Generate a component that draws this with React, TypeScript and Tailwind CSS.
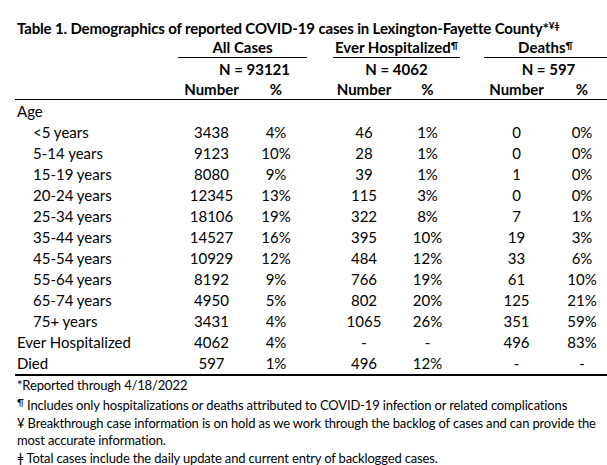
const GRID =
  "grid grid-cols-[178px_67px_62px_26px_62px_65px_24px_65px_58px] items-center";

type Row = { label: string; indent?: boolean; cells: string[] };

const ROWS: Row[] = [
  { label: "<5 years", indent: true, cells: ["3438", "4%", "46", "1%", "0", "0%"] },
  { label: "5-14 years", indent: true, cells: ["9123", "10%", "28", "1%", "0", "0%"] },
  { label: "15-19 years", indent: true, cells: ["8080", "9%", "39", "1%", "1", "0%"] },
  { label: "20-24 years", indent: true, cells: ["12345", "13%", "115", "3%", "0", "0%"] },
  { label: "25-34 years", indent: true, cells: ["18106", "19%", "322", "8%", "7", "1%"] },
  { label: "35-44 years", indent: true, cells: ["14527", "16%", "395", "10%", "19", "3%"] },
  { label: "45-54 years", indent: true, cells: ["10929", "12%", "484", "12%", "33", "6%"] },
  { label: "55-64 years", indent: true, cells: ["8192", "9%", "766", "19%", "61", "10%"] },
  { label: "65-74 years", indent: true, cells: ["4950", "5%", "802", "20%", "125", "21%"] },
  { label: "75+ years", indent: true, cells: ["3431", "4%", "1065", "26%", "351", "59%"] },
  { label: "Ever Hospitalized", cells: ["4062", "4%", "-", "-", "496", "83%"] },
  { label: "Died", cells: ["597", "1%", "496", "12%", "-", "-"] },
];

function Sup({ children }: { children: React.ReactNode }) {
  return <sup className="relative -top-[3px] text-[10px] leading-none">{children}</sup>;
}

function DataRow({ row }: { row: Row }) {
  const [a, b, c, d, e, f] = row.cells;
  return (
    <div className={`${GRID} h-[21px]`}>
      <div className={row.indent ? "pl-[33px]" : "pl-[17px]"}>{row.label}</div>
      <div className="text-center">{a}</div>
      <div className="text-center">{b}</div>
      <div />
      <div className="text-center">{c}</div>
      <div className="text-center">{d}</div>
      <div />
      <div className="text-center">{e}</div>
      <div className="pl-[8px] text-center">{f}</div>
    </div>
  );
}

export default function App() {
  return (
    <div className="w-[607px] h-[465px] overflow-hidden bg-white text-black font-['Lato',sans-serif] text-[15px] leading-none">
      <div className="h-[18px]" />
      <div className="h-[20px] flex items-center pl-[17px] font-bold whitespace-nowrap tracking-[-0.01em]">
        Table 1. Demographics of reported COVID-19 cases in Lexington-Fayette County*
        <Sup>¥ǂ</Sup>
      </div>

      {/* group headings */}
      <div className={`${GRID} h-[20px] font-bold`}>
        <div />
        <div className="col-span-2 h-full flex items-center justify-center border-b border-black">All Cases</div>
        <div />
        <div className="col-span-2 h-full flex items-center justify-center border-b border-black">
          Ever Hospitalized<Sup>¶</Sup>
        </div>
        <div />
        <div className="col-span-2 h-full flex items-center justify-center border-b border-black">
          Deaths<Sup>¶</Sup>
        </div>
      </div>

      <div className={`${GRID} h-[22px] font-bold`}>
        <div />
        <div className="col-span-2 pl-[24px] text-center">N = 93121</div>
        <div />
        <div className="col-span-2 text-center">N = 4062</div>
        <div />
        <div className="col-span-2 pl-[6px] text-center">N = 597</div>
      </div>

      <div className="ml-[15px] border-b border-black">
        <div className={`${GRID} h-[19px] font-bold -ml-[15px]`}>
          <div />
          <div className="text-center">Number</div>
          <div className="text-center">%</div>
          <div />
          <div className="text-center">Number</div>
          <div className="text-center">%</div>
          <div />
          <div className="text-center">Number</div>
          <div className="pl-[8px] text-center">%</div>
        </div>
      </div>

      <div className="h-[1px]" />
      <div className="h-[21px] flex items-center pl-[17px]">Age</div>
      {ROWS.map((r) => (
        <DataRow key={r.label} row={r} />
      ))}
      <div className="ml-[15px] border-b-2 border-black" />

      <div className="pl-[17px] text-[13px] whitespace-nowrap tracking-[-0.012em]">
        <div className="h-[19px] flex items-center">*Reported through 4/18/2022</div>
        <div className="h-[20px] flex items-center">
          <Sup>¶</Sup>&nbsp;Includes only hospitalizations or deaths attributed to COVID-19 infection or related complications
        </div>
        <div className="leading-[17px]">
          ¥ Breakthrough case information is on hold as we work through the backlog of cases and can provide the
          <br />
          most accurate information.
        </div>
        <div className="h-[18px] flex items-center">ǂ Total cases include the daily update and current entry of backlogged cases.</div>
      </div>
    </div>
  );
}
